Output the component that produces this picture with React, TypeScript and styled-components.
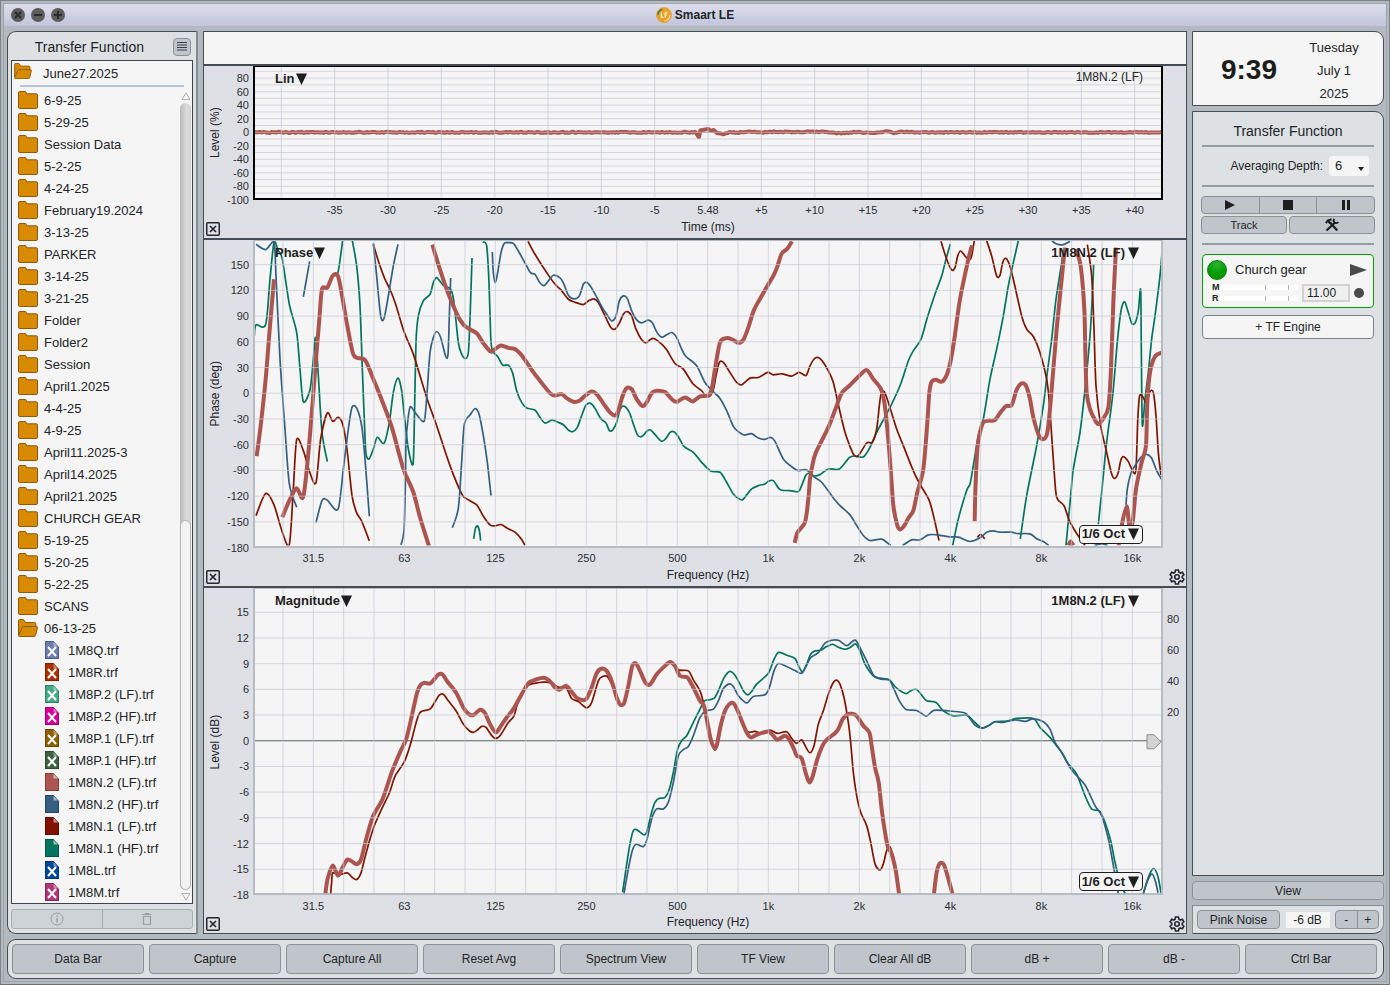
import React from "react";
import styled, { createGlobalStyle, css } from "styled-components";

const GlobalStyle = createGlobalStyle`
  *, *::before, *::after { box-sizing: border-box; }
  body {
    margin: 0;
    color: #222427;
    font-family: "Liberation Sans", Arial, sans-serif;
    font-size: 12px;
    line-height: 16px;
  }
  button, input, select, output {
    font: inherit;
    color: inherit;
    margin: 0;
    padding: 0;
  }
  h1, h2, p, ul { margin: 0; padding: 0; font-weight: normal; }
  ul { list-style: none; }
`;

/* ---------- window ---------- */

const Window = styled.div`
  min-height: 100vh;
  display: flex;
  flex-direction: column;
  background: #b2babf;
  border: 1px solid #7d8286;
  border-bottom-color: #6d7276;
  padding: 2px;
`;

const Frame = styled.div`
  flex: 1;
  display: flex;
  flex-direction: column;
  border: 1px solid #9ea5a9;
`;

const TitleBar = styled.header`
  height: 22px;
  position: relative;
  display: flex;
  align-items: center;
  justify-content: center;
  gap: 3px;
  background: linear-gradient(#dddeed, #c2c5db);
  font-weight: bold;
`;

const WindowTitle = styled.h1`
  font-size: 12px;
  font-weight: bold;
`;

const WindowControls = styled.div`
  position: absolute;
  left: 7px;
  top: 4px;
  display: flex;
  gap: 6px;
`;

const RoundButton = styled.button`
  width: 14px;
  height: 14px;
  border: 0;
  border-radius: 50%;
  background: #5c5c5c;
  display: grid;
  place-items: center;
`;

const Body = styled.main`
  flex: 1;
  display: grid;
  grid-template-columns: 191px minmax(0, 1fr) 192px;
  gap: 5px;
  padding: 5px 2px 5px 3px;
`;

const face = css`
  background: #bfc5ca;
  border: 1px solid #8c9296;
  border-radius: 4px;
  display: grid;
  place-items: center;
`;

/* ---------- data bar ---------- */

const DataBar = styled.aside`
  display: flex;
  flex-direction: column;
  background: #dde1e4;
  border: 1px solid #454e54;
  border-right: 2px solid #858c90;
  border-radius: 9px 0 0 9px;
  padding: 0 3px 4px;
`;

const DataHead = styled.div`
  height: 28px;
  display: flex;
  align-items: center;
  justify-content: flex-end;
  gap: 29px;
  padding: 1px 2px 0 0;
`;

const PanelTitle = styled.h2`
  font-size: 14px;
  text-align: center;
`;

const MenuButton = styled.button`
  ${face}
  width: 18px;
  height: 18px;
`;

const FileBox = styled.div`
  flex: 1;
  background: #f5f5f5;
  border: 1px solid #3c454b;
`;

const SessionRow = styled.div`
  height: 26px;
  margin: 0 8px 2px;
  border-bottom: 2px solid #b7c5dc;
  display: flex;
  align-items: center;
  font-size: 13px;
`;

const SessionIcon = styled.span`
  margin-left: -6px;
  width: 29px;
  height: 20px;
`;

const FileArea = styled.div`
  display: flex;
  justify-content: space-between;
`;

const FileRow = styled.button<{ $nested?: boolean }>`
  height: 22px;
  display: flex;
  align-items: center;
  gap: ${(p) => (p.$nested ? 9 : 6)}px;
  padding-left: ${(p) => (p.$nested ? 33 : 6)}px;
  border: 0;
  background: none;
  font-size: 13px;
  white-space: nowrap;
`;

const FileName = styled.span`
  padding-top: 2px;
`;

const Scroller = styled.div`
  width: 12px;
  padding: 3px 1px 2px 0;
  display: flex;
  flex-direction: column;
  align-items: center;
  gap: 3px;
`;

const ScrollTrack = styled.div`
  flex: 1;
  width: 11px;
  display: flex;
  flex-direction: column;
  justify-content: flex-end;
  border-radius: 6px;
  background: linear-gradient(90deg, #b9b9b9, #dcdcdc 60%, #d2d2d2);
`;

const ScrollThumb = styled.div`
  height: 47%;
  border: 1px solid #b4b4b4;
  border-radius: 6px;
  background: #f3f3f3;
`;

const DataActions = styled.div`
  height: 20px;
  margin-top: 5px;
  display: flex;
  border: 1px solid #a8afb3;
  border-radius: 3px;
  background: #ced3d7;
`;

const DataAction = styled.button`
  flex: 1;
  border: 0;
  background: none;
  display: grid;
  place-items: center;
  & + & { border-left: 1px solid #a8afb3; }
`;

/* ---------- plots ---------- */

const PlotColumn = styled.section`
  display: flex;
  flex-direction: column;
  background: #dfe0e6;
  border: 1px solid #454e54;
`;

const PlotHeader = styled.div`
  height: 34px;
  background: #f5f5f5;
  border-bottom: 2px solid #454c52;
`;

const Pane = styled.div<{ $height?: number }>`
  ${(p) => (p.$height ? `height: ${p.$height}px;` : "flex: 1; min-height: 240px;")}
  display: grid;
  grid-template-columns: 49px minmax(0, 1fr) 23px;
  grid-template-rows: minmax(0, 1fr) 38px;
  & + & { border-top: 2px solid #454c52; }
`;

const AxisName = styled.div`
  display: grid;
  place-items: center;
  width: 22px;
  writing-mode: vertical-rl;
  transform: rotate(180deg);
`;

const PlotArea = styled.div<{ $active?: boolean }>`
  grid-column: 2;
  position: relative;
  display: flex;
  border: 2px solid ${(p) => (p.$active ? "#000" : "#b7bbc2")};
  border-top-width: 1px;
  background: #f5f5f5;
`;

const Chart = styled.svg`
  width: 100%;
  flex: 1;
  overflow: visible;
`;

const PlotFooter = styled.div`
  grid-column: 1 / -1;
  display: grid;
  grid-template-columns: 49px minmax(0, 1fr) 23px;
  align-items: end;
  padding-bottom: 1px;
`;

const AxisTitle = styled.div`
  text-align: center;
  padding-bottom: 2px;
`;

const IconButton = styled.button`
  width: 16px;
  height: 16px;
  border: 0;
  background: none;
  display: grid;
  place-items: center;
`;

const FooterSlot = styled.div<{ $end?: boolean }>`
  display: flex;
  justify-content: ${(p) => (p.$end ? "flex-end" : "flex-start")};
  padding: 0 1px;
`;

const PlotMenu = styled.button<{ $corner: "name" | "trace" | "octave" }>`
  position: absolute;
  display: flex;
  align-items: center;
  gap: ${(p) => (p.$corner === "name" ? 1 : 3)}px;
  border: 0;
  background: none;
  font-size: 13px;
  font-weight: bold;
  white-space: nowrap;
  color: #1e1e1e;
  ${(p) => p.$corner === "name" && "left: 20px; top: 4px;"}
  ${(p) => p.$corner === "trace" && "right: 22px; top: 4px;"}
  ${(p) =>
    p.$corner === "octave" &&
    `right: 18px; bottom: 2px; height: 19px; padding: 0 3px 0 2px;
     border: 1px solid #1e1e1e; border-radius: 4px; background: #f5f5f5;`}
`;

const TraceName = styled.div`
  position: absolute;
  right: 18px;
  top: 2px;
`;

/* ---------- control bar ---------- */

const ControlBar = styled.aside`
  display: flex;
  flex-direction: column;
  gap: 5px;
`;

const Clock = styled.div`
  height: 75px;
  display: grid;
  grid-template-columns: 112px 1fr;
  align-items: center;
  padding-top: 3px;
  text-align: center;
  background: #f5f5f5;
  border: 1px solid #454e54;
  border-radius: 0 9px 9px 0;
`;

const Time = styled.div`
  font-size: 28px;
  line-height: 32px;
  font-weight: bold;
  color: #1c1c1c;
`;

const DateText = styled.div`
  font-size: 13px;
  line-height: 23px;
  padding-right: 20px;
`;

const Engine = styled.div`
  flex: 1;
  display: flex;
  flex-direction: column;
  padding: 11px 9px 0;
  background: #dde1e4;
  border: 1px solid #454e54;
  border-radius: 0 9px 0 0;
`;

const Rule = styled.div<{ $above?: number }>`
  height: 2px;
  background: #969ca0;
  margin: ${(p) => p.$above ?? 9}px 0 9px;
`;

const Averaging = styled.label`
  display: flex;
  align-items: center;
  justify-content: flex-end;
  gap: 6px;
  padding-right: 5px;
`;

const SelectWrap = styled.span`
  position: relative;
  display: block;
  width: 40px;
  height: 20px;
`;

const Select = styled.select`
  appearance: none;
  width: 100%;
  height: 100%;
  padding-left: 6px;
  border: 0;
  border-radius: 3px;
  background: #f5f5f5;
  font-size: 13px;
`;

const SelectArrow = styled.svg`
  position: absolute;
  right: 5px;
  bottom: 5px;
  pointer-events: none;
`;

const Segments = styled.div<{ $height: number }>`
  ${face}
  height: ${(p) => p.$height}px;
  display: flex;
  place-items: stretch;
`;

const Segment = styled.button`
  flex: 1;
  border: 0;
  background: none;
  display: grid;
  place-items: center;
  & + & { border-left: 1px solid #8c9296; }
`;

const Transport = styled.div`
  margin: 0 -1px;
`;

const Pair = styled.div`
  display: grid;
  grid-template-columns: 1fr 1fr;
  gap: 2px;
  margin-top: 2px;
`;

const SmallButton = styled.button`
  ${face}
  height: 18px;
  font-size: 11px;
`;

const EngineCard = styled.div`
  height: 54px;
  border: 1px solid #00a000;
  border-radius: 4px;
  background: #f5f5f5;
  padding: 4px 6px 0 4px;
`;

const CardTop = styled.div`
  height: 21px;
  display: flex;
  align-items: center;
  gap: 8px;
  font-size: 13px;
  & > :last-child { margin-left: auto; }
`;

const Led = styled.span`
  width: 20px;
  height: 20px;
  border: 1px solid #0a7d0a;
  border-radius: 50%;
  background: radial-gradient(circle at 50% 20%, #2fb52f, #009a00 60%);
`;

const CardBottom = styled.div`
  display: flex;
  align-items: center;
  justify-content: space-between;
  padding: 3px 3px 0 5px;
`;

const Meters = styled.div`
  width: 86px;
  display: grid;
  grid-template-columns: 8px 1fr;
  row-gap: 2px;
  align-items: center;
  font-size: 9px;
  line-height: 9px;
  font-weight: bold;
`;

const Meter = styled.span`
  height: 5px;
  background:
    linear-gradient(#b5b5b5, #b5b5b5) 45px 0 / 1px 5px no-repeat,
    linear-gradient(#b5b5b5, #b5b5b5) 68px 0 / 1px 5px no-repeat,
    #fff;
`;

const DelayField = styled.input`
  width: 48px;
  height: 18px;
  padding-left: 3px;
  border: 2px solid #d2d2d2;
  background: #f0f0f0;
`;

const Dot = styled.span`
  width: 10px;
  height: 10px;
  border-radius: 50%;
  background: #4a4a4a;
`;

const AddEngine = styled.button`
  height: 24px;
  margin-top: 7px;
  border: 1px solid #7b8286;
  border-radius: 4px;
  background: #f5f5f5;
`;

const ViewButton = styled.button`
  ${face}
  height: 19px;
`;

const Generator = styled.div`
  height: 29px;
  display: flex;
  align-items: center;
  justify-content: space-between;
  padding: 0 4px;
  background: #dde1e4;
  border: 1px solid #858c90;
  border-bottom-color: #454e54;
  border-radius: 0 0 10px 0;
`;

const NoiseButton = styled.button`
  ${face}
  width: 83px;
  height: 19px;
`;

const Gain = styled.output`
  width: 44px;
  background: #f5f5f5;
  text-align: center;
`;

const GainSteps = styled.div`
  width: 44px;
`;

/* ---------- command bar ---------- */

const CommandBar = styled.nav`
  display: flex;
  gap: 5px;
  height: 40px;
  margin: 0 2px 2px 3px;
  padding: 4px 6px 4px 4px;
  background: #dde1e4;
  border: 1px solid #454e54;
  border-radius: 9px;
`;

const Command = styled.button`
  ${face}
  flex: 1;
  font-size: 12px;
`;

/* ---------- icons ---------- */

const Logo = () => (
  <svg width="16" height="16" viewBox="0 0 16 16" aria-hidden="true">
    <circle cx="8" cy="8" r="7.5" fill="#eda32a" stroke="#d8921f" strokeWidth=".6" />
    <path d="M2 7.600A6 6 0 0 1 6.200 2.300" fill="none" stroke="#1d7a5c" strokeWidth="1.400" />
    <path d="M14 8A6 6 0 0 1 8.500 14" fill="none" stroke="#f8d98c" strokeWidth="1.200" />
    <path d="M5.400 5.500v4.800h2M11.400 5.900H9.200v4.600M9.200 8h1.800" fill="none" stroke="#fff3cf" strokeWidth="1.200" />
  </svg>
);

const Glyph = ({ d }: { d: string }) => (
  <svg width="14" height="14" viewBox="0 0 14 14" aria-hidden="true">
    <path d={d} stroke="#2b2b2b" strokeWidth="2" fill="none" />
  </svg>
);

const Folder = () => (
  <svg width="20" height="18" viewBox="0 0 20 18" aria-hidden="true">
    <path
      d="M.5 1.800Q.5.5 1.800.5h5.400q.8 0 1 .8l.4 1.500h9.600q1.300 0 1.300 1.200v12.200q0 1.300-1.300 1.300H1.800Q.5 17.500 .5 16.200z"
      fill="#d88a00"
      stroke="#8b5a0a"
    />
  </svg>
);

const OpenFolder = ({ small }: { small?: boolean }) => (
  <svg width={small ? 18 : 20} height={small ? 16 : 18} viewBox="0 0 20 18" aria-hidden="true">
    <path d="M.5 16V1.800Q.5.5 1.800.5h3.700l2 3h9q1.300 0 1.300 1.300V9" fill="#d88a00" stroke="#8b5a0a" />
    <path
      d="M5.500 7.500H18.700q1 0 .8 1l-2 8q-.2 1-1.300 1H1.500q-1.200 0-.9-1L4.200 8.400q.3-.9 1.300-.9z"
      fill="#d88a00"
      stroke="#8b5a0a"
    />
  </svg>
);

const TraceFile = ({ color, loaded }: { color: string; loaded?: boolean }) => (
  <svg width="14" height="18" viewBox="0 0 14 18" aria-hidden="true">
    <path d="M0 0h8.500L14 6v12H0z" fill={color} />
    <path d="M.5.5h7.800L13.500 6.200V17.500H.5z" fill="none" stroke="#000" strokeOpacity=".25" />
    <path d="M8.500.8V5.500H13z" fill="#fff" fillOpacity={loaded ? 0.55 : 0.4} />
    {!loaded && <path d="M3 6l8 9M11 6l-8 9" stroke="#fff" strokeWidth="2" />}
  </svg>
);

const Caret = () => (
  <svg width="11" height="12" viewBox="0 0 11 12" aria-hidden="true">
    <path d="M0 .5h11L5.500 12z" fill="#1e1e1e" />
  </svg>
);

const Gear = () => (
  <svg width="16" height="16" viewBox="0 0 24 24" fill="none" stroke="#26292c" strokeWidth="2.400" aria-hidden="true">
    <path d="M9.800 1.500h4.400l.7 3.300 2 1.200 3.200-1.100 2.200 3.800-2.500 2.200v2.200l2.500 2.200-2.200 3.800-3.200-1.100-2 1.200-.7 3.300H9.800l-.7-3.300-2-1.200-3.200 1.100-2.200-3.800 2.500-2.200v-2.200L1.700 8.700l2.200-3.800 3.200 1.100 2-1.200z" />
    <circle cx="12" cy="12" r="3.400" />
  </svg>
);

const CloseBox = () => (
  <svg width="14" height="14" viewBox="0 0 14 14" fill="none" stroke="#26292c" aria-hidden="true">
    <rect x=".75" y=".75" width="12.500" height="12.500" rx="1" strokeWidth="1.500" />
    <path d="M4 4l6 6M10 4l-6 6" strokeWidth="1.700" />
  </svg>
);

const Tools = () => (
  <svg width="14" height="14" viewBox="0 0 14 14" fill="none" stroke="#1e1e1e" aria-hidden="true">
    <path d="M1.500 12.500L10 4.500" strokeWidth="2.200" />
    <path d="M9.300 .8a2.600 2.600 0 1 0 4 3.400" strokeWidth="1.800" />
    <path d="M5 4.500l7.300 8" strokeWidth="2.200" />
    <path d="M.8 5.200L2.800 2.500 6.500 1.200" strokeWidth="2" />
    <path d="M2.500 2.500l3 3" strokeWidth="2.400" />
  </svg>
);

/* ---------- chart data ---------- */

type Point = [number, number];
type Trace = { color: string; bold?: boolean; points: Point[] };

// Reads "x,y x,y ..." and shifts it along the frequency axis.
const at = (shift: number, text: string): Point[] =>
  text.split(" ").map((pair) => {
    const [x, y] = pair.split(",").map(Number);
    return [x + shift, y];
  });

// Catmull-Rom spline through the points, written as cubic segments.
const spline = (p: Point[]) => {
  let d = `M${p[0][0]} ${p[0][1]}`;
  for (let i = 0; i < p.length - 1; i++) {
    const a = p[Math.max(i - 1, 0)];
    const b = p[i];
    const c = p[i + 1];
    const e = p[Math.min(i + 2, p.length - 1)];
    const k = 7;
    const c1 = [b[0] + (c[0] - a[0]) / k, b[1] + (c[1] - a[1]) / k];
    const c2 = [c[0] - (e[0] - b[0]) / k, c[1] - (e[1] - b[1]) / k];
    d += `C${c1[0].toFixed(1)} ${c1[1].toFixed(1)} ${c2[0].toFixed(1)} ${c2[1].toFixed(1)} ${c[0]} ${c[1]}`;
  }
  return d;
};

const ROSE = "#ac5550";
const MAROON = "#7f1400";
const GREEN = "#00745c";
const BLUE = "#335f80";

const LOW = 0;
const MID = 900;
const HIGH = 1920;
const UPPER = 1470;

const phaseTraces: Trace[] = [
  { color: GREEN, points: at(LOW, "163,300 168,267 197,266 210,130 222,20 235,45 247,70 268,205 290,290 300,400 310,498 330,462 340,370 347,305 355,420 366,590 382,678") },
  { color: GREEN, points: at(LOW, "406,120 415,105 428,14") },
  { color: GREEN, points: at(LOW, "457,14 470,90 480,210 487,400 494,580 498,655 507,670 520,640 532,605 552,623 568,560 580,470 594,427 605,465 613,540 625,640 639,686 643,560 648,320 655,240 670,195 690,175 700,140 710,125 730,148 752,160 762,200 775,320 785,355 797,368 805,350 810,250 816,66") },
  { color: GREEN, points: [...at(LOW, "848,18 860,30 867,140 872,300 877,345 893,362 908,388 925,388 938,412 950,465 965,500 980,517"), ...at(MID, "105,523 118,542 135,562 155,553 170,558 190,567 205,583 218,588 232,575 243,545 258,508 272,503 285,518 302,548 318,562 328,585 338,583 350,560 360,522 372,511 388,530 400,565 412,597 422,604 432,597 442,585 452,583 468,600 485,617 498,608 510,590 522,588 535,603 552,632 580,650 605,680 632,706 660,710 680,740 700,775 715,788 727,793 740,778 755,760 775,750 795,745 805,737 820,735 835,757 845,764 870,765 895,768 905,750 918,718 930,713 942,721 960,717 985,700 1018,700"), ...at(HIGH, "28,666 45,661 70,664 90,635 110,590 150,515 180,450 205,375 220,345 243,310 262,245 285,175 305,120 318,70 331,24")] },
  { color: GREEN, points: at(HIGH, "338,930 355,850 380,765 390,745 400,690 415,600 430,550 450,430 470,340 490,240 505,150 520,80 535,14") },
  { color: GREEN, points: at(HIGH, "541,910 560,780 590,630 610,510 622,410 635,310 648,190 662,100 668,60") },
  { color: GREEN, points: at(HIGH, "678,930 692,780 700,700 720,590 735,460 750,300 758,160 761,85") },
  { color: GREEN, points: at(HIGH, "775,866 785,770 800,620 818,480 830,340 837,270 845,215 854,198 865,230 875,262 885,262 895,225 902,162 904,350 907,568 915,490 925,410 935,310 945,240 960,120 966,50") },
  { color: GREEN, points: at(LOW, "821,910 826,880 832,871 838,885 842,915") },
  { color: MAROON, points: at(LOW, "168,840 197,774 222,808 247,890 268,927 280,760 290,612 310,645 330,712 348,741 362,610 382,532 398,557 414,545 428,565 441,640 456,780 470,832 485,857 508,916") },
  { color: MAROON, points: at(LOW, "520,25 535,75 555,130 570,160 587,205 613,290 640,355 680,485 710,570 750,690 785,775 800,790 830,808 850,842 870,868 885,871 903,867 925,880 945,890 965,912 975,930") },
  { color: MAROON, points: [...at(MID, "84,16 105,55 148,122 168,148 183,162 205,190 225,199 250,206 265,195 282,189 295,200 315,240 332,274 345,280 358,262 370,235 382,227 395,240 408,280 425,312 438,321 450,312 462,308 485,325 500,342 525,383 550,400 578,443 605,465 615,478 628,482 640,462 648,420 658,380 670,380 690,410 710,440 725,447 750,427 775,425 803,410 820,417 845,414 875,421 897,410 918,419 930,390 945,367 962,370 985,405 1000,440 1018,520 1035,590"), ...at(HIGH, "30,632 42,658 55,660 80,622 97,620 110,580 118,510 124,470 133,468 145,500 170,580 190,630 222,710 245,755 268,795 285,860 297,915")] },
  { color: MAROON, points: at(HIGH, "303,16 320,70 335,102 345,95 353,60 362,45 375,60 387,72 395,60 403,14") },
  { color: MAROON, points: at(HIGH, "440,14 455,60 470,120 480,118 488,80 497,67 508,85 520,130 545,240 560,280 580,302 600,350 620,430 628,500 635,600 642,700 650,785 672,810 688,855 712,897 735,930") },
  { color: MAROON, points: at(HIGH, "742,26 755,120 762,280 768,450 782,570 800,650 815,715 825,728 835,710 842,675 850,663 865,678 880,710 888,700 893,560 898,485 905,478 912,490 920,500 930,468 940,470 948,540 955,650 963,718") },
  { color: MAROON, points: at(HIGH, "412,905 422,897 434,910") },
  { color: BLUE, points: at(LOW, "168,25 197,41 222,20 228,120 240,370 255,580 268,745 290,815") },
  { color: BLUE, points: at(LOW, "310,183 329,76") },
  { color: BLUE, points: at(LOW, "348,861 366,795 382,794 414,821 430,700 445,580 456,515 470,517 485,570 495,670 508,842") },
  { color: BLUE, points: at(LOW, "520,22 530,120 542,240 552,248 565,180 580,90 594,25") },
  { color: BLUE, points: at(LOW, "603,928 612,885 616,750 618,620 624,550 631,513 645,530 668,557 675,545 682,460 690,350 700,305 710,287 722,305 737,362 744,355 748,240 752,126") },
  { color: BLUE, points: at(LOW, "757,877 775,818 785,680 793,565 810,538 825,519 837,535 850,600 862,680 873,780") },
  { color: BLUE, points: [...at(LOW, "877,48 880,110 886,140 893,110 903,50 913,22 925,20 940,22 955,45 980,90"), ...at(MID, "92,111 105,115 118,138 132,149 145,135 160,118 180,126 192,145 205,178 222,189 238,180 250,145 260,139 272,152 288,180 305,212 320,235 335,255 348,240 358,195 370,180 382,188 395,225 410,252 425,261 445,253 458,262 470,288 485,304 500,297 515,290 530,305 545,340 558,362 590,390 615,440 640,468 660,488 680,525 700,572 715,588 732,598 755,594 775,607 795,611 812,605 825,617 850,670 880,697 895,705 915,702 930,710 942,724 965,740 1000,787"), ...at(HIGH, "0,810 30,838 50,870 70,900 90,915 125,911 152,930")] },
  { color: BLUE, points: at(HIGH, "188,930 215,913 240,913 265,898 290,898 330,904 355,905 390,918 420,907 440,890 460,886 480,890 515,890 530,894 570,895 590,910 610,918 626,930") },
  { color: BLUE, points: at(HIGH, "635,14 650,24 670,26 690,16") },
  { color: BLUE, points: at(HIGH, "763,930 785,925 803,930") },
  { color: BLUE, points: at(HIGH, "858,808 862,760 872,715 885,690 905,663 920,656 935,668 950,705 966,733") },
  { color: ROSE, bold: true, points: at(LOW, "170,662 182,570 197,430 210,270 222,130") },
  { color: ROSE, bold: true, points: at(LOW, "247,845 268,795 290,758 310,783 328,620 348,370 358,250 366,160 382,155 398,120 414,120 428,190 441,265 458,350 470,366 496,374 520,430 545,492 574,570 600,665 613,708 640,770 660,845 687,932") },
  { color: ROSE, bold: true, points: [...at(LOW, "697,26 715,85 740,160 762,215 782,255 800,275 830,292 850,322 872,347 885,340 903,329 925,336 945,340"), ...at(MID, "60,353 75,372 95,402 120,435 150,472 165,479 185,475 200,487 220,498 238,495 255,480 275,467 290,475 310,503 330,530 345,539 355,525 368,480 380,457 395,460 410,490 428,511 440,500 455,472 470,465 495,469 515,490 530,498 555,485 578,497 600,482 625,479 635,460 645,400 660,320 680,307 697,311 715,321 730,312 745,275 762,222 785,180 802,150 820,120 832,92 845,53 862,38 876,16")] },
  { color: ROSE, bold: true, points: [...at(MID, "884,922 893,890 915,860 925,790 930,730 937,690 948,650 985,575 1010,510 1025,472"), ...at(HIGH, "28,450 55,423 80,403 100,430 122,458 133,500 142,580 152,700 160,810 172,870 180,882 193,870 205,848 220,825 232,770 250,700 262,560 268,470 275,438 288,432 305,438 320,418 332,375 343,310 360,190 385,70 396,28")] },
  { color: ROSE, bold: true, points: at(HIGH, "404,857 406,770 412,640 420,590 430,560 445,555 465,553 480,532 498,511 515,508 530,462 545,443 558,450 570,490 580,545 597,600 612,610 622,590 630,520 640,400 650,280 662,160 672,60 676,35") },
  { color: ROSE, bold: true, points: at(HIGH, "708,40 722,90 733,220 736,350 740,470 750,520 765,553 775,565 790,548 805,515 813,400 820,200 828,35") },
  { color: ROSE, bold: true, points: at(HIGH, "836,930 845,870 860,812 868,870 878,860 888,760 905,680 918,630 922,500 930,410 945,362 966,350") },
  { color: ROSE, bold: true, points: at(HIGH, "685,930 692,918 700,930") },
];

const magnitudeTraces: Trace[] = [
  { color: GREEN, points: [...at(LOW, "1268,920 1278,850 1290,775 1300,735 1310,732 1330,747 1340,740 1355,680 1365,650 1378,638 1395,635 1408,610 1420,560 1433,490 1445,465 1460,450 1475,420 1495,380"), ...at(UPPER, "42,347 55,342 72,338 85,315 100,280 112,262 122,257 135,268 150,295 162,318 173,327 185,317 200,295 235,262 250,225 262,202 272,200 290,208 315,218 328,245 338,258 350,235 362,205 375,195 392,193 410,182 428,175 445,184 465,190 480,185 497,174 510,195 525,235 550,270 570,277 598,282 615,302 635,318 650,323 665,313 680,311 695,328 710,345 738,350 760,375 790,390 830,388 850,405 875,427 895,420 915,408 950,406 980,398 1030,398 1050,425 1080,455 1105,487 1118,505 1135,535 1160,565 1185,630 1205,670 1228,676 1245,710 1262,765 1275,830 1290,890 1305,924")] },
  { color: GREEN, points: at(UPPER, "1360,924 1375,875 1390,849 1403,870 1413,922") },
  { color: BLUE, points: [...at(LOW, "1272,924 1285,850 1297,795 1308,776 1330,783 1340,765 1355,700 1370,670 1390,670 1405,650 1420,590 1435,510 1450,492 1465,482 1480,450 1500,395"), ...at(UPPER, "48,375 70,370 85,345 100,308 118,294 130,302 145,330 160,345 172,351 190,332 225,327 238,305 252,255 265,233 290,242 315,254 335,262 350,238 362,215 385,200 405,172 425,163 445,163 470,179 485,168 497,163 510,185 530,225 552,270 575,280 598,283 612,310 628,345 648,371 680,374 708,391 725,378 740,373 820,380 835,392 855,418 875,427 895,420 915,408 940,410 975,402 1005,407 1030,399 1060,408 1080,430 1095,470 1115,500 1145,553 1185,598 1215,660 1235,690 1255,760 1270,840 1285,924")] },
  { color: BLUE, points: at(UPPER, "1360,924 1375,880 1387,866 1397,890 1404,922") },
  { color: MAROON, points: [...at(LOW, "392,924 395,890 398,862 415,868 442,862 456,875 470,882 483,862 495,815 510,760 525,715 545,670 568,622 585,572 613,528 630,480 650,405 662,378 690,370 705,348 718,328 730,325 745,345 768,375 790,415 808,435 820,440 833,432 845,422 858,425 872,445 885,458 900,450 925,410 942,390 955,345 975,308 990,296 1030,289 1055,291 1075,304 1098,305 1115,338 1135,347 1150,360 1162,366 1175,350 1195,285 1208,272 1222,272 1235,295 1250,335 1262,358 1272,353 1285,300 1297,240 1308,233 1320,255 1335,288 1348,297 1370,265 1395,240 1410,230 1435,252 1465,255 1480,282 1500,315"), ...at(UPPER, "40,350 48,395 58,445 68,480 76,492 85,465 100,390 115,357 130,352 155,405 172,438 195,437 215,443 240,433 262,443 290,438 305,458 320,473 335,462 348,485 360,501 372,480 385,415 400,375 415,325 430,290 440,283 450,295 462,335 475,410 482,470 490,560 500,630 512,680 530,720 542,770 555,835 570,853 580,835 590,795 600,784 612,820")] },
  { color: ROSE, bold: true, points: [...at(LOW, "376,924 383,880 398,840 414,870 428,845 442,822 456,828 470,836 483,822 500,755 520,690 548,640 575,560 600,500 618,462 630,415 650,325 660,300 672,291 690,293 703,280 715,266 728,266 742,287 768,320 790,365 805,384 820,388 840,372 855,382 870,415 887,440 900,425 920,395 940,370 965,325 985,292 1000,284 1030,276 1050,286 1065,305 1078,312 1098,300 1115,318 1130,336 1150,343 1160,338 1175,305 1190,262 1205,248 1220,255 1235,285 1250,335 1260,356 1272,353 1285,300 1297,240 1308,233 1320,255 1335,288 1348,297 1360,282 1370,265 1395,240 1410,228 1425,240 1440,270 1462,275 1480,305 1500,345"), ...at(UPPER, "42,360 52,410 62,460 72,485 80,480 92,420 105,375 118,355 130,352 142,372 155,405 170,440 183,455 200,447 235,437 250,450 262,462 285,450 298,462 312,490 320,510 335,518 348,565 358,590 368,572 382,520 400,475 415,458 442,435 458,400 472,386 485,384 500,390 520,420 538,440 545,480 555,545 566,590 575,670 585,740 594,785 605,805 618,860 627,924")] },
  { color: ROSE, bold: true, points: at(UPPER, "732,924 740,860 750,833 762,838 775,880 787,924") },
];

// Impulse response: a noise floor with the arrival just before the 5.48 ms mark.
const impulse: Point[] = (() => {
  const shape = at(1440, "-1275,217 45,217 51,224 57,230 61,213 72,209 84,206 92,212 100,210 108,217 122,221 138,221 152,216 172,218 205,215 250,217 290,215 340,217 430,215 480,220 530,216 585,220 620,214 640,219 665,215 730,217 830,217 1443,217");
  return shape.flatMap((p, i): Point[] => {
    const next = shape[i + 1];
    if (!next) return [p];
    const steps = Math.max(1, Math.round((next[0] - p[0]) / 5));
    return Array.from({ length: steps }, (_, s): Point => {
      const seed = Math.sin((i * 31 + s + 1) * 78.233) * 4375.5;
      const noise = (seed - Math.floor(seed) - 0.5) * 3;
      return [p[0] + ((next[0] - p[0]) * s) / steps, p[1] + ((next[1] - p[1]) * s) / steps + noise];
    });
  });
})();

const range = (n: number, from: number, step: number) => Array.from({ length: n }, (_, i) => from + i * step);

type Tick = { text: string; pos: number };
const ticks = (labels: string, from: number, step: number): Tick[] =>
  labels.split(" ").map((text, i) => ({ text, pos: from + i * step }));

const octaves = ticks("31.5 63 125 250 500 1k 2k 4k 8k 16k", 340, 273);
const octaveGrid = range(29, 249, 91);

type PlotProps = {
  top: number;
  height: number;
  traces: Trace[];
  xTicks: Tick[];
  yTicks: Tick[];
  rightTicks?: Tick[];
  xGrid: number[];
  yGrid: number[];
  zero?: number;
  zeroColor?: string;
  marker?: boolean;
};

const LEFT = 165;
const WIDTH = 2718;

const Plot = ({ top, height, traces, xTicks, yTicks, rightTicks = [], xGrid, yGrid, zero, zeroColor, marker }: PlotProps) => {
  const px = (x: number) => `${((x - LEFT) / WIDTH) * 100}%`;
  const py = (y: number) => `${((y - top) / height) * 100}%`;
  return (
    <Chart fontSize="11" fill="#2b2f33">
      <svg width="100%" height="100%" viewBox={`${LEFT} ${top} ${WIDTH} ${height}`} preserveAspectRatio="none">
        {zero !== undefined && marker && (
          <path d={`M${LEFT} ${zero}H${LEFT + WIDTH}`} stroke={zeroColor} vectorEffect="non-scaling-stroke" />
        )}
        {traces.map((t, i) => (
          <path
            key={i}
            d={spline(t.points)}
            fill="none"
            stroke={t.color}
            strokeWidth={t.bold ? 4 : 1.7}
            strokeLinejoin="round"
            vectorEffect="non-scaling-stroke"
          />
        ))}
        <path
          d={xGrid.map((x) => `M${x} ${top}V${top + height}`).join("") + yGrid.map((y) => `M${LEFT} ${y}H${LEFT + WIDTH}`).join("")}
          stroke="#c6c9d3"
          strokeOpacity=".7"
          vectorEffect="non-scaling-stroke"
        />
        {zero !== undefined && !marker && (
          <path d={`M${LEFT} ${zero}H${LEFT + WIDTH}`} stroke={zeroColor} vectorEffect="non-scaling-stroke" />
        )}
      </svg>
      {yTicks.map((t) => (
        <text key={t.text} x="-6" y={py(t.pos)} dy="4" textAnchor="end">{t.text}</text>
      ))}
      {rightTicks.map((t) => (
        <text key={t.text} x="100%" dx="6" y={py(t.pos)} dy="4">{t.text}</text>
      ))}
      {xTicks.map((t) => (
        <text key={t.text} x={px(t.pos)} y="100%" dy="16" textAnchor="middle">{t.text}</text>
      ))}
      {marker && zero !== undefined && (
        <svg x="100%" y={py(zero)} overflow="visible">
          <path d="M-14-6h7l7 7-7 7h-7z" fill="#d4d4d4" stroke="#8a8a8a" />
        </svg>
      )}
    </Chart>
  );
};

const PaneFooter = ({ title, gear }: { title: string; gear?: boolean }) => (
  <PlotFooter>
    <FooterSlot><IconButton aria-label="Close plot"><CloseBox /></IconButton></FooterSlot>
    <AxisTitle>{title}</AxisTitle>
    {gear && <FooterSlot $end><IconButton aria-label="Plot settings"><Gear /></IconButton></FooterSlot>}
  </PlotFooter>
);

const folders = [
  "6-9-25", "5-29-25", "Session Data", "5-2-25", "4-24-25", "February19.2024", "3-13-25", "PARKER",
  "3-14-25", "3-21-25", "Folder", "Folder2", "Session", "April1.2025", "4-4-25", "4-9-25",
  "April11.2025-3", "April14.2025", "April21.2025", "CHURCH GEAR", "5-19-25", "5-20-25", "5-22-25", "SCANS",
];

const files: { name: string; color: string; loaded?: boolean }[] = [
  { name: "1M8Q.trf", color: "#6a7db0" },
  { name: "1M8R.trf", color: "#ac2f00" },
  { name: "1M8P.2 (LF).trf", color: "#43ab88" },
  { name: "1M8P.2 (HF).trf", color: "#d6009b" },
  { name: "1M8P.1 (LF).trf", color: "#8f6000" },
  { name: "1M8P.1 (HF).trf", color: "#3f6340" },
  { name: "1M8N.2 (LF).trf", color: ROSE, loaded: true },
  { name: "1M8N.2 (HF).trf", color: BLUE, loaded: true },
  { name: "1M8N.1 (LF).trf", color: "#801000", loaded: true },
  { name: "1M8N.1 (HF).trf", color: GREEN, loaded: true },
  { name: "1M8L.trf", color: "#00479a" },
  { name: "1M8M.trf", color: "#b03778" },
];

const commands = ["Data Bar", "Capture", "Capture All", "Reset Avg", "Spectrum View", "TF View", "Clear All dB", "dB +", "dB -", "Ctrl Bar"];

export default function App() {
  return (
    <Window>
      <GlobalStyle />
      <Frame>
        <TitleBar>
          <WindowControls>
            <RoundButton aria-label="Close"><Glyph d="M4 4l6 6M10 4l-6 6" /></RoundButton>
            <RoundButton aria-label="Minimize"><Glyph d="M3 7h8" /></RoundButton>
            <RoundButton aria-label="Zoom"><Glyph d="M3 7h8M7 3v8" /></RoundButton>
          </WindowControls>
          <Logo />
          <WindowTitle>Smaart LE</WindowTitle>
        </TitleBar>

        <Body>
          <DataBar>
            <DataHead>
              <PanelTitle>Transfer Function</PanelTitle>
              <MenuButton aria-label="Menu">
                <svg width="10" height="9" viewBox="0 0 10 9" aria-hidden="true">
                  <path d="M0 .5h10M0 3h10M0 5.500h10M0 8h10" stroke="#3a3f43" />
                </svg>
              </MenuButton>
            </DataHead>
            <FileBox>
              <SessionRow>
                <SessionIcon><OpenFolder small /></SessionIcon>
                <FileName>June27.2025</FileName>
              </SessionRow>
              <FileArea>
                <ul>
                  {folders.map((name) => (
                    <li key={name}><FileRow><Folder /><FileName>{name}</FileName></FileRow></li>
                  ))}
                  <li><FileRow><OpenFolder /><FileName>06-13-25</FileName></FileRow></li>
                  {files.map((f) => (
                    <li key={f.name}>
                      <FileRow $nested>
                        <TraceFile color={f.color} loaded={f.loaded} />
                        <FileName>{f.name}</FileName>
                      </FileRow>
                    </li>
                  ))}
                </ul>
                <Scroller>
                  <svg width="10" height="8" viewBox="0 0 10 8" aria-hidden="true">
                    <path d="M5 1l4 6.500H1z" fill="none" stroke="#b0b0b0" />
                  </svg>
                  <ScrollTrack><ScrollThumb /></ScrollTrack>
                  <svg width="10" height="8" viewBox="0 0 10 8" aria-hidden="true">
                    <path d="M5 7L1 .5h8z" fill="none" stroke="#b0b0b0" />
                  </svg>
                </Scroller>
              </FileArea>
            </FileBox>
            <DataActions>
              <DataAction aria-label="Info" disabled>
                <svg width="14" height="14" viewBox="0 0 14 14" fill="none" stroke="#989fa3" aria-hidden="true">
                  <circle cx="7" cy="7" r="6" />
                  <path d="M7 6v4.500M7 3.300v1.500" strokeWidth="1.400" />
                </svg>
              </DataAction>
              <DataAction aria-label="Delete" disabled>
                <svg width="12" height="14" viewBox="0 0 12 14" fill="none" stroke="#989fa3" strokeWidth="1.200" aria-hidden="true">
                  <path d="M1.500 2.500h9M4 1.500h4M2.500 4.500v8h7v-8z" />
                </svg>
              </DataAction>
            </DataActions>
          </DataBar>

          <PlotColumn>
            <PlotHeader />
            <Pane $height={172}>
              <AxisName>Level (%)</AxisName>
              <PlotArea $active>
                <Plot
                  top={21}
                  height={393}
                  traces={[{ color: ROSE, bold: true, points: impulse }]}
                  xTicks={ticks("-35 -30 -25 -20 -15 -10 -5 5.48 +5 +10 +15 +20 +25 +30 +35 +40", 404, 160)}
                  yTicks={ticks("80 60 40 20 0 -20 -40 -60 -80 -100", 54, 40.6)}
                  xGrid={range(17, 244, 160)}
                  yGrid={range(19, 34, 20.3).filter((_, i) => i !== 9)}
                  zero={217}
                  zeroColor="#b9a2a8"
                />
                <PlotMenu $corner="name">Lin<Caret /></PlotMenu>
                <TraceName>1M8N.2 (LF)</TraceName>
              </PlotArea>
              <PaneFooter title="Time (ms)" />
            </Pane>
            <Pane>
              <AxisName>Phase (deg)</AxisName>
              <PlotArea>
                <Plot
                  top={15}
                  height={915}
                  traces={phaseTraces}
                  xTicks={octaves}
                  yTicks={ticks("150 120 90 60 30 0 -30 -60 -90 -120 -150 -180", 86, 77.3)}
                  xGrid={octaveGrid}
                  yGrid={range(11, 86, 77.3)}
                />
                <PlotMenu $corner="name">Phase<Caret /></PlotMenu>
                <PlotMenu $corner="trace">1M8N.2 (LF)<Caret /></PlotMenu>
                <PlotMenu $corner="octave">1/6 Oct<Caret /></PlotMenu>
              </PlotArea>
              <PaneFooter title="Frequency (Hz)" gear />
            </Pane>
            <Pane>
              <AxisName>Level (dB)</AxisName>
              <PlotArea>
                <Plot
                  top={9}
                  height={915}
                  traces={magnitudeTraces}
                  xTicks={octaves}
                  yTicks={ticks("15 12 9 6 3 0 -3 -6 -9 -12 -15 -18", 79, 77.2)}
                  rightTicks={ticks("80 60 40 20", 100, 93)}
                  xGrid={octaveGrid}
                  yGrid={range(11, 79, 77.2).filter((_, i) => i !== 5)}
                  zero={465}
                  zeroColor="#596060"
                  marker
                />
                <PlotMenu $corner="name">Magnitude<Caret /></PlotMenu>
                <PlotMenu $corner="trace">1M8N.2 (LF)<Caret /></PlotMenu>
                <PlotMenu $corner="octave">1/6 Oct<Caret /></PlotMenu>
              </PlotArea>
              <PaneFooter title="Frequency (Hz)" gear />
            </Pane>
          </PlotColumn>

          <ControlBar>
            <Clock>
              <Time>9:39</Time>
              <DateText>
                <div>Tuesday</div>
                <div>July 1</div>
                <div>2025</div>
              </DateText>
            </Clock>
            <Engine>
              <PanelTitle>Transfer Function</PanelTitle>
              <Rule $above={6} />
              <Averaging>
                Averaging Depth:
                <SelectWrap>
                  <Select defaultValue="6"><option>6</option></Select>
                  <SelectArrow width="6" height="4" viewBox="0 0 6 4"><path d="M0 0h6L3 4z" fill="#1e1e1e" /></SelectArrow>
                </SelectWrap>
              </Averaging>
              <Rule />
              <Transport>
                <Segments $height={18}>
                  <Segment aria-label="Play">
                    <svg width="10" height="10" viewBox="0 0 10 10" aria-hidden="true"><path d="M0 0l10 5-10 5z" fill="#1e1e1e" /></svg>
                  </Segment>
                  <Segment aria-label="Stop">
                    <svg width="10" height="10" viewBox="0 0 10 10" aria-hidden="true"><path d="M0 0h10v10H0z" fill="#1e1e1e" /></svg>
                  </Segment>
                  <Segment aria-label="Pause">
                    <svg width="8" height="10" viewBox="0 0 8 10" aria-hidden="true"><path d="M0 0h3v10H0zM5 0h3v10H5z" fill="#1e1e1e" /></svg>
                  </Segment>
                </Segments>
                <Pair>
                  <SmallButton>Track</SmallButton>
                  <SmallButton aria-label="Engine tools"><Tools /></SmallButton>
                </Pair>
              </Transport>
              <Rule />
              <EngineCard>
                <CardTop>
                  <Led />
                  Church gear
                  <svg width="17" height="12" viewBox="0 0 17 12" aria-hidden="true"><path d="M0 0l17 6-17 6z" fill="#4a4a4a" /></svg>
                </CardTop>
                <CardBottom>
                  <Meters>
                    <span>M</span><Meter />
                    <span>R</span><Meter />
                  </Meters>
                  <DelayField defaultValue="11.00" aria-label="Delay" />
                  <Dot />
                </CardBottom>
              </EngineCard>
              <AddEngine>+ TF Engine</AddEngine>
            </Engine>
            <ViewButton>View</ViewButton>
            <Generator>
              <NoiseButton>Pink Noise</NoiseButton>
              <Gain>-6 dB</Gain>
              <GainSteps>
                <Segments $height={19}>
                  <Segment>-</Segment>
                  <Segment>+</Segment>
                </Segments>
              </GainSteps>
            </Generator>
          </ControlBar>
        </Body>

        <CommandBar>
          {commands.map((name) => <Command key={name}>{name}</Command>)}
        </CommandBar>
      </Frame>
    </Window>
  );
}
